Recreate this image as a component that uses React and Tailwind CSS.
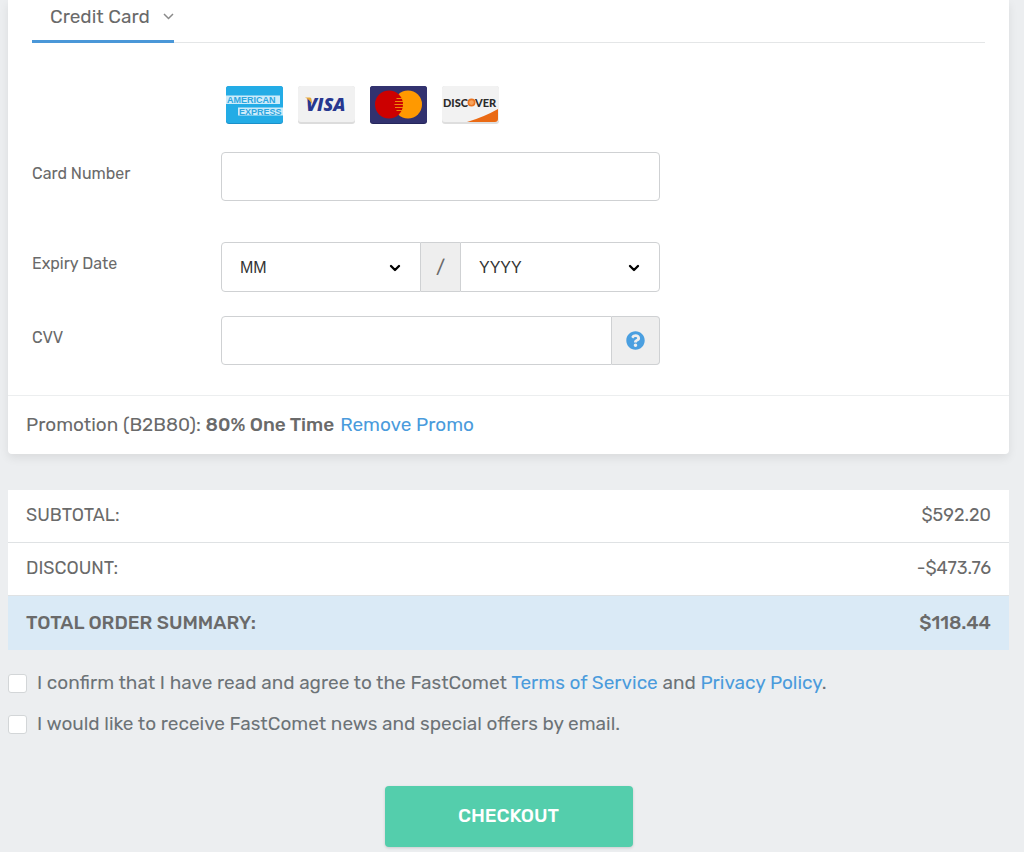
import { useState } from "react";
import { ChevronDown } from "lucide-react";
import { FaQuestionCircle } from "react-icons/fa";

const TOTALS = [
  { label: "SUBTOTAL:", amount: "$592.20" },
  { label: "DISCOUNT:", amount: "-$473.76" },
];

const MONTHS = ["01", "02", "03", "04", "05", "06", "07", "08", "09", "10", "11", "12"];
const YEARS = ["2024", "2025", "2026", "2027", "2028", "2029", "2030"];

function Amex() {
  return (
    <svg role="img" aria-label="American Express" viewBox="0 0 57 38" className="w-[57px] h-[38px]">
      <rect width="57" height="38" rx="3" fill="#1a8fc9" />
      <rect width="57" height="37" rx="3" fill="#23ace6" />
      <path d="M0 9.500h54v8.500H0zM12 21.500h45v8H12z" fill="#cdecfa" />
      <g fontFamily="Liberation Sans" fontWeight="bold" fontSize="9" fill="#2ba5e0">
        <text x="1" y="17">AMERICAN</text>
        <text x="13" y="29">EXPRESS</text>
      </g>
    </svg>
  );
}

function Visa() {
  return (
    <svg role="img" aria-label="Visa" viewBox="0 0 57 38" className="w-[57px] h-[38px]">
      <rect width="57" height="38" rx="3" fill="#dcdcdc" />
      <rect width="57" height="36" rx="3" fill="#f1f1f1" />
      <text x="8" y="25" fontFamily="Open Sans" fontWeight="800" fontStyle="italic" fontSize="18" fill="#27378f">VISA</text>
      <path d="M7 11.500h4.600q1.400 0 1.700 1.300l1.200 6q-2.500-5-7.500-7.300z" fill="#e8a93a" />
    </svg>
  );
}

function Mastercard() {
  return (
    <svg role="img" aria-label="Mastercard" viewBox="0 0 57 38" className="w-[57px] h-[38px]">
      <rect width="57" height="38" rx="3" fill="#25265c" />
      <rect width="57" height="37" rx="3" fill="#32326f" />
      <circle cx="38" cy="18.500" r="14" fill="#ff9900" />
      <circle cx="19" cy="18.500" r="14" fill="#cc0000" />
      <path d="M26.500 12.500h6M25 15.500h8M24.500 18.500h8.500M25 21.500h8M26.500 24.500h6" stroke="#f08a08" strokeWidth="1.200" />
    </svg>
  );
}

function Discover() {
  return (
    <svg role="img" aria-label="Discover" viewBox="0 0 57 38" className="w-[57px] h-[38px]">
      <rect width="57" height="38" rx="3" fill="#dedede" />
      <rect width="57" height="36" rx="3" fill="#f2f2f2" />
      <path d="M25 36Q42 31 56 23v10q0 3-3 3z" fill="#ea6a14" />
      <g fontFamily="Lato" fontWeight="900" fontSize="11" fill="#2b2b2b">
        <text x="1" y="20.500">DISC</text>
        <text x="33" y="20.500">VER</text>
      </g>
      <circle cx="29.500" cy="16.600" r="3.200" fill="#f7a35c" stroke="#ea7420" strokeWidth="1.600" />
    </svg>
  );
}

function Field({ id, label, children }) {
  return (
    <div className="flex items-start">
      <label htmlFor={id} className="w-[189px] shrink-0 pt-3 text-[16px] leading-5">
        {label}
      </label>
      <div className="flex flex-1 max-w-[439px]">{children}</div>
    </div>
  );
}

function ExpirySelect({ id, label, options, className }) {
  return (
    <div className="relative flex-1">
      <select
        id={id}
        aria-label={label}
        className={`w-full h-[50px] pt-[2px] pl-[18px] pr-10 appearance-none border border-[#cfd1d3] bg-white font-['Liberation_Sans',sans-serif] text-[16px] text-[#333] ${className}`}
      >
        <option>{label}</option>
        {options.map((o) => (
          <option key={o}>{o}</option>
        ))}
      </select>
      <ChevronDown className="absolute right-[18px] top-[18px] w-4 h-4 text-black pointer-events-none" strokeWidth={3.5} />
    </div>
  );
}

function Consent({ id, children }) {
  return (
    <div className="flex items-center gap-[10px]">
      <input
        id={id}
        type="checkbox"
        className="w-[19px] h-[19px] shrink-0 appearance-none rounded-[3px] border border-[#d3d6d8] bg-white checked:bg-[#4a9fe0]"
      />
      <label htmlFor={id} className="text-[19px] leading-6 text-[#6c7377]">
        {children}
      </label>
    </div>
  );
}

export default function App() {
  const [promo, setPromo] = useState(true);

  return (
    <div className="min-h-screen bg-[#eceef0] pl-2 pr-[15px] pb-[5px] font-['Rubik','Roboto',sans-serif] text-[#6a6a6a]">
      <section className="rounded-b-[4px] bg-white shadow-[0_4px_10px_rgba(0,0,0,0.08)]">
        <div className="px-6 pb-[30px]">
          <div className="flex h-[43px] border-b border-[#e4e6e7]">
            <button type="button" className="-mb-px flex items-center pl-[18px] pb-[7px] border-b-3 border-[#4a97d8] text-[19px] leading-6">
              Credit Card
              <svg viewBox="0 0 11 7" className="ml-[13px] w-[11px] h-[7px]" fill="none" stroke="#8a8a8a" strokeWidth="1.500">
                <path d="M1 1l4.500 4.500L10 1" />
              </svg>
            </button>
          </div>

          <div className="flex gap-[15px] pl-[194px] pt-[43px] pb-7">
            <Amex />
            <Visa />
            <Mastercard />
            <Discover />
          </div>

          <Field id="card-number" label="Card Number">
            <input id="card-number" type="text" className="w-full h-[49px] px-4 rounded-[4px] border border-[#cfd1d3] bg-white" />
          </Field>

          <div className="mt-[41px] mb-6">
            <Field id="expiry-month" label="Expiry Date">
              <ExpirySelect id="expiry-month" label="MM" options={MONTHS} className="rounded-l-[4px]" />
              <span className="w-[39px] h-[50px] flex items-center justify-center border-y border-[#cfd1d3] bg-[#eee] text-[19px]">/</span>
              <ExpirySelect id="expiry-year" label="YYYY" options={YEARS} className="rounded-r-[4px]" />
            </Field>
          </div>

          <Field id="cvv" label="CVV">
            <input id="cvv" type="text" className="flex-1 min-w-0 h-[49px] px-4 rounded-l-[4px] border border-[#cfd1d3] bg-white" />
            <button type="button" aria-label="What is CVV?" className="w-12 h-[49px] flex items-center justify-center rounded-r-[4px] border border-l-0 border-[#cfd1d3] bg-[#eee]">
              <FaQuestionCircle className="w-[19px] h-[19px] text-[#4a9fe0]" />
            </button>
          </Field>
        </div>

        {promo && (
          <div className="flex flex-wrap items-center border-t border-[#eceeef] px-[18px] h-[59px] text-[19px] leading-6">
            <span>
              Promotion (B2B80): <strong className="font-medium">80% One Time</strong>
            </span>
            <button type="button" onClick={() => setPromo(false)} className="ml-[6px] text-[#4a9bdc]">
              Remove Promo
            </button>
          </div>
        )}
      </section>

      <table className="mt-9 w-full text-[18px] leading-6">
        <tbody>
          {TOTALS.map((row) => (
            <tr key={row.label} className="border-b border-[#dfe2e4] bg-white">
              <th scope="row" className="px-[18px] pt-[13px] pb-[15px] text-left font-normal">{row.label}</th>
              <td className="px-[18px] pt-[13px] pb-[15px] text-right">{row.amount}</td>
            </tr>
          ))}
          <tr className="bg-[#daeaf6] text-[19px]">
            <th scope="row" className="px-[18px] py-[15px] text-left font-medium">TOTAL ORDER SUMMARY:</th>
            <td className="px-[18px] py-[15px] text-right font-medium">$118.44</td>
          </tr>
        </tbody>
      </table>

      <div className="mt-[21px] flex flex-col gap-[17px]">
        <Consent id="terms">
          I confirm that I have read and agree to the FastComet{" "}
          <a href="#terms" className="text-[#4a9bdc]">Terms of Service</a> and{" "}
          <a href="#privacy" className="text-[#4a9bdc]">Privacy Policy</a>.
        </Consent>
        <Consent id="news">I would like to receive FastComet news and special offers by email.</Consent>
      </div>

      <button
        type="button"
        className="mt-[50px] mx-auto block w-[248px] h-[61px] rounded-[4px] bg-[#54ceac] text-[19px] font-medium text-white shadow-[0_1px_3px_rgba(0,0,0,0.15)]"
      >
        CHECKOUT
      </button>
    </div>
  );
}
